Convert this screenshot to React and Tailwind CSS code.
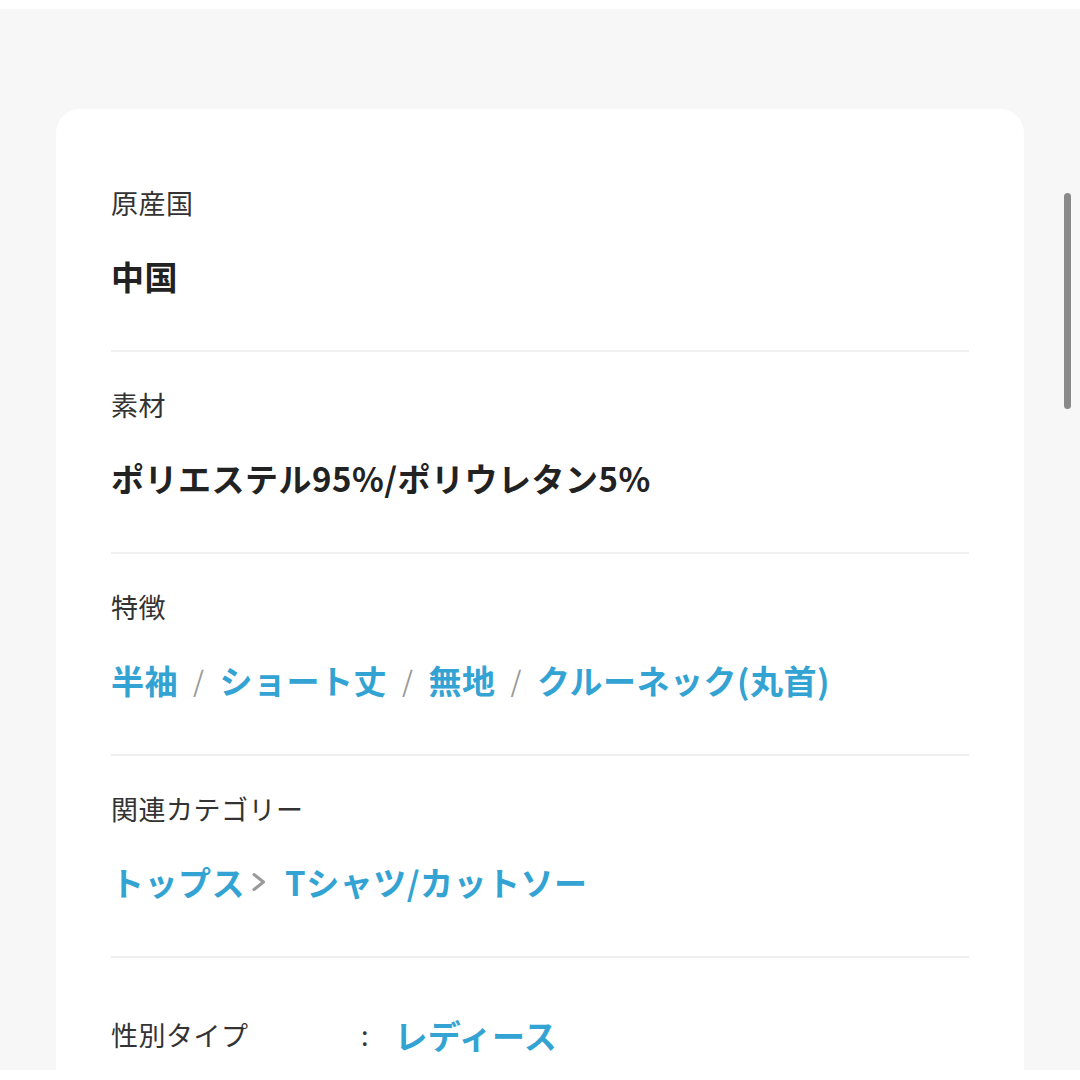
import React from "react";

const FONT = { fontFamily: '"Noto Sans CJK JP", "Noto Sans", sans-serif' };

function Label({ children }) {
  return <div className="h-[36px] text-[27px] leading-[36px] tracking-[0.5px] text-[#333333] whitespace-nowrap">{children}</div>;
}

function Divider() {
  return <div className="h-[2px] bg-[#f0f0f0]" />;
}

function Slash() {
  return <span className="mx-[15px] font-normal text-[28px] text-[#9a9a9a]">/</span>;
}

const VALUE = "mt-[33px] h-[44px] text-[33px] leading-[44px] tracking-[0.5px] font-bold whitespace-nowrap";

export default function App() {
  return (
    <div className="w-[1080px] h-[1080px] bg-white pt-[9px] overflow-hidden" style={FONT}>
      <div className="relative h-[1061px] bg-[#f7f7f7] pt-[100px] overflow-hidden">
        <div className="ml-[56px] w-[968px] h-[1000px] bg-white rounded-t-[24px] px-[55px] pt-[76px]">
          {/* 原産国 */}
          <Label>原産国</Label>
          <div className={`${VALUE} text-[#222222]`}>中国</div>
          <div className="h-[52px]" />
          <Divider />

          {/* 素材 */}
          <div className="pt-[35px]">
            <Label>素材</Label>
            <div className={`${VALUE} text-[#222222]`}>ポリエステル95%/ポリウレタン5%</div>
          </div>
          <div className="h-[52px]" />
          <Divider />

          {/* 特徴 */}
          <div className="pt-[35px]">
            <Label>特徴</Label>
            <div className={`${VALUE} text-[#33a3d3] flex items-center`}>
              <span>半袖</span>
              <Slash />
              <span>ショート丈</span>
              <Slash />
              <span>無地</span>
              <Slash />
              <span>クルーネック(丸首)</span>
            </div>
          </div>
          <div className="h-[52px]" />
          <Divider />

          {/* 関連カテゴリー */}
          <div className="pt-[35px]">
            <Label>関連カテゴリー</Label>
            <div className={`${VALUE} text-[#33a3d3] flex items-center`}>
              <span>トップス</span>
              <svg className="ml-[6px] mr-[18px]" width="16" height="20" viewBox="0 0 16 20" fill="none">
                <path d="M3 2.5 L12.5 10 L3 17.5" stroke="#9a9a9a" strokeWidth="3" strokeLinecap="round" strokeLinejoin="round" />
              </svg>
              <span>Tシャツ/カットソー</span>
            </div>
          </div>
          <div className="h-[52px]" />
          <Divider />

          {/* 性別タイプ */}
          <div className="pt-[55px] flex items-center">
            <div className="w-[250px] h-[44px] text-[27px] leading-[44px] tracking-[0.5px] text-[#333333]">性別タイプ</div>
            <div className="h-[44px] text-[27px] leading-[44px] text-[#333333]">:</div>
            <div className="ml-[26px] h-[44px] text-[33px] leading-[44px] tracking-[0.3px] font-bold text-[#33a3d3]">レディース</div>
          </div>
        </div>

        {/* scrollbar overlay */}
        <div className="absolute left-[1064px] top-[184px] w-[7px] h-[216px] rounded-full bg-[#8a8a8a]" />
      </div>
      <div className="h-[10px] bg-white" />
    </div>
  );
}
